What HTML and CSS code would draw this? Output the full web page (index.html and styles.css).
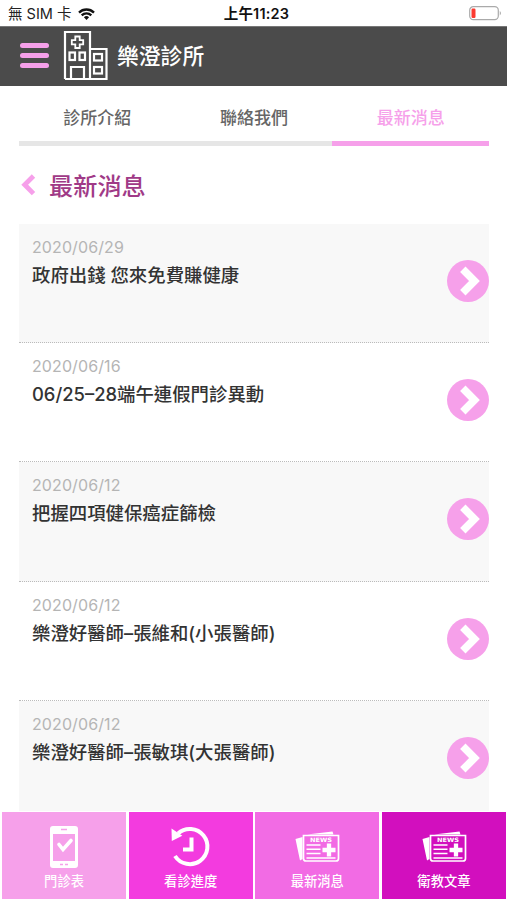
FILE: index.html
```html
<!DOCTYPE html>
<html lang="zh-Hant">
<head>
	<meta charset="UTF-8">
	<title>樂澄診所</title>
	<link rel="stylesheet" href="styles.css">
</head>
<body>
	<div class="status">
		<div class="carrier">
			<span>無 SIM 卡</span>
			<svg width="17" height="12" viewBox="0 0 17 12" fill="none" stroke="#111" stroke-width="2.3">
				<path d="M1 4.6a10.6 10.6 0 0 1 15 0"/>
				<path d="M3.7 7.4a6.8 6.8 0 0 1 9.6 0"/>
				<path d="M8.5 12L5.9 9.3a3.7 3.7 0 0 1 5.2 0z" fill="#111" stroke="none"/>
			</svg>
		</div>
		<div class="time">上午11:23</div>
		<svg class="battery" width="33" height="15" viewBox="0 0 33 15">
			<rect x="0.7" y="0.7" width="28.6" height="13" rx="3.6" fill="#fff" stroke="#aaa" stroke-width="1.2"/>
			<rect x="2.5" y="2.5" width="4" height="9.5" rx="1.2" fill="#fb3a30"/>
			<path d="M30.8 5q2 2.2 0 4.4z" fill="#999"/>
		</svg>
	</div>
	<div class="header">
		<div class="menu"><i></i><i></i><i></i></div>
		<svg class="logo" width="46" height="51" viewBox="0 0 46 51" fill="none" stroke="#fff" stroke-width="2.2">
			<path d="M2 49V2H27V49M27 19H43.500V49H2M8 49V37H21V49"/>
			<path d="M12.300 6.500h4.400v3.600h3.500v4.300h-3.500v3.600h-4.400v-3.600H8.800v-4.300h3.500z" stroke-width="1.800"/>
			<rect x="6.500" y="22.500" width="5.500" height="7.500"/>
			<rect x="16.500" y="22.500" width="5.500" height="7.500"/>
			<rect x="31" y="24" width="8" height="6.500"/>
			<rect x="31" y="37" width="8" height="6.500"/>
		</svg>
		<div class="name">樂澄診所</div>
	</div>
	<div class="tabs">
		<a>診所介紹</a>
		<a>聯絡我們</a>
		<a class="on">最新消息</a>
	</div>
	<div class="title">
		<svg width="15" height="22" viewBox="0 0 15 22" fill="none" stroke="#f6a0ea" stroke-width="4.8">
			<path d="M12.500 2L3.700 10.800L12.500 19.600"/>
		</svg>
		<h1>最新消息</h1>
	</div>
	<div class="list">
		<div class="item">
			<div class="text"><p class="date">2020/06/29</p><h2>政府出錢 您來免費賺健康</h2></div>
			<svg class="arrow" viewBox="0 0 42 42"><circle cx="21" cy="21" r="21"/><path d="M15.800 9.200L27.500 21L15.800 32.800"/></svg>
		</div>
		<div class="item">
			<div class="text"><p class="date">2020/06/16</p><h2>06/25–28端午連假門診異動</h2></div>
			<svg class="arrow" viewBox="0 0 42 42"><circle cx="21" cy="21" r="21"/><path d="M15.800 9.200L27.500 21L15.800 32.800"/></svg>
		</div>
		<div class="item">
			<div class="text"><p class="date">2020/06/12</p><h2>把握四項健保癌症篩檢</h2></div>
			<svg class="arrow" viewBox="0 0 42 42"><circle cx="21" cy="21" r="21"/><path d="M15.800 9.200L27.500 21L15.800 32.800"/></svg>
		</div>
		<div class="item">
			<div class="text"><p class="date">2020/06/12</p><h2>樂澄好醫師–張維和(小張醫師)</h2></div>
			<svg class="arrow" viewBox="0 0 42 42"><circle cx="21" cy="21" r="21"/><path d="M15.800 9.200L27.500 21L15.800 32.800"/></svg>
		</div>
		<div class="item">
			<div class="text"><p class="date">2020/06/12</p><h2>樂澄好醫師–張敏琪(大張醫師)</h2></div>
			<svg class="arrow" viewBox="0 0 42 42"><circle cx="21" cy="21" r="21"/><path d="M15.800 9.200L27.500 21L15.800 32.800"/></svg>
		</div>
	</div>
	<div class="nav">
		<a class="n1">
			<svg width="48" height="44" viewBox="0 0 48 44">
				<path fill="#fff" fill-rule="evenodd" d="M13 1h22q3 0 3 3v36q0 3-3 3H13q-3 0-3-3V4q0-3 3-3zM13 9v27h22V9z"/>
				<path d="M21 4.500h6M20 39.500h3M25 39.500h3" stroke="#f6a0ea" stroke-width="1.600"/>
				<path d="M19 19.500l4 5 8-9" fill="none" stroke="#fff" stroke-width="3.600" stroke-linecap="round"/>
			</svg>
			<span>門診表</span>
		</a>
		<a class="n2">
			<svg width="48" height="44" viewBox="0 0 48 44">
				<path d="M8 31A17.600 17.600 0 1 0 11 8.500" fill="none" stroke="#fff" stroke-width="4"/>
				<path d="M4.500 3.500l10.800 7.200-10.500 5.300z" fill="#fff"/>
				<path d="M24.500 12.500v12H16" fill="none" stroke="#fff" stroke-width="4"/>
			</svg>
			<span>看診進度</span>
		</a>
		<a class="n3">
			<svg width="48" height="44" viewBox="0 0 48 44">
				<path d="M2.500 14l7-2v22l-2.500 1.500zM14 9.500L39.500 6.500l1 3z" fill="#fff"/>
				<path d="M10.500 10.500h35v23q0 2.500-2.500 2.500H13q-2.500 0-2.500-2.500z" fill="#f26be4" stroke="#fff" stroke-width="1.700"/>
				<text class="news" x="17" y="16.500" textLength="22" lengthAdjust="spacingAndGlyphs">NEWS</text>
				<path d="M13.500 20h14M13.500 24.300h14M13.500 28.600h14M13.500 33h29" stroke="#fff" stroke-width="1.500"/>
				<path d="M36 18.500v13M29.500 25h13" stroke="#fff" stroke-width="4.300"/>
			</svg>
			<span>最新消息</span>
		</a>
		<a class="n4">
			<svg width="48" height="44" viewBox="0 0 48 44">
				<path d="M2.500 14l7-2v22l-2.500 1.500zM14 9.500L39.500 6.500l1 3z" fill="#fff"/>
				<path d="M10.500 10.500h35v23q0 2.500-2.500 2.500H13q-2.500 0-2.500-2.500z" fill="#d20fbe" stroke="#fff" stroke-width="1.700"/>
				<text class="news" x="17" y="16.500" textLength="22" lengthAdjust="spacingAndGlyphs">NEWS</text>
				<path d="M13.500 20h14M13.500 24.300h14M13.500 28.600h14M13.500 33h29" stroke="#fff" stroke-width="1.500"/>
				<path d="M36 18.500v13M29.500 25h13" stroke="#fff" stroke-width="4.300"/>
			</svg>
			<span>衛教文章</span>
		</a>
	</div>
</body>
</html>
```
FILE: styles.css
```css
* { box-sizing: border-box; }
body { margin: 0;width: 507px;height: 900px;display: flex;flex-direction: column;overflow: hidden;background: #fff;font-family: Inter, "Noto Sans CJK TC", sans-serif; }
svg { display: block;flex-shrink: 0; }
h1, h2, p { margin: 0; }
.status { height: 26px;flex-shrink: 0;display: grid;grid-template-columns: 1fr auto 1fr;align-items: center;padding: 1px 5px 0 8px;font-size: 14.5px;color: #222; }
.carrier { display: flex;align-items: center;gap: 7px;line-height: 22px; }
.time { margin-left: 3px;font-weight: 600;letter-spacing: 0.2px;color: #111;line-height: 22px; }
.battery { justify-self: end; }
.header { height: 60px;flex-shrink: 0;display: flex;align-items: center;padding: 0 0 2px 20px;background: #4b4b4b;border-top: 1px solid #777; }
.menu { width: 29px;display: flex;flex-direction: column;gap: 5px; }
.menu i { height: 5px;border-radius: 3px;background: #f6a0ea; }
.logo { margin-left: 14px; }
.name { margin: -2px 0 0 8px;font-size: 21.8px;font-weight: 500;color: #fff; }
.tabs { height: 60px;flex-shrink: 0;margin: 0 18px 0 19px;display: grid;grid-template-columns: repeat(3, 1fr); }
.tabs a { padding-top: 20px;border-bottom: 5px solid #e6e6e6;text-align: center;font-size: 17px;font-weight: 500;line-height: 25px;color: #666; }
.tabs .on { border-color: #f6a0ea;color: #f6a0ea; }
.title { height: 78px;flex-shrink: 0;display: flex;align-items: center;gap: 13px;padding-left: 21px; }
.title h1 { margin-top: 3px;font-size: 24.2px;font-weight: 500;line-height: 36px;color: #a03a87; }
.list { height: 587px;flex-shrink: 0;margin: 0 18px 0 19px;overflow: hidden; }
.item { height: 119.2px;display: flex;justify-content: space-between;border-bottom: 1px dotted #bbb; }
.item:nth-child(odd) { background: #f8f8f8; }
.text { padding: 12px 0 0 13px; }
.date { font-size: 16px;line-height: 22px;letter-spacing: 0.1px;color: #b5b5b5; }
.item h2 { font-size: 18.4px;font-weight: 500;line-height: 28px;color: #333;margin-top: 3px;white-space: nowrap; }
.arrow { width: 42px;height: 42px;margin-top: 36px; }
.arrow circle { fill: #f6a0ea; }
.arrow path { fill: none;stroke: #fff;stroke-width: 7.6; }
.nav { flex: 1;display: grid;grid-template-columns: repeat(4, 1fr);gap: 2.5px;padding: 1px 1px 1px 2px;background: #fff; }
.nav a { display: flex;flex-direction: column;align-items: center;padding-top: 13px;font-size: 13.3px;font-weight: 500;line-height: 20px;color: #fff; }
.nav span { margin-top: 2px; }
.n1 { background: #f6a0ea; }
.n2 { background: #f33bdf; }
.n3 { background: #f26be4; }
.n4 { background: #d20fbe; }
.news { font: bold 6px "DejaVu Sans", sans-serif;fill: #fff; }
```
